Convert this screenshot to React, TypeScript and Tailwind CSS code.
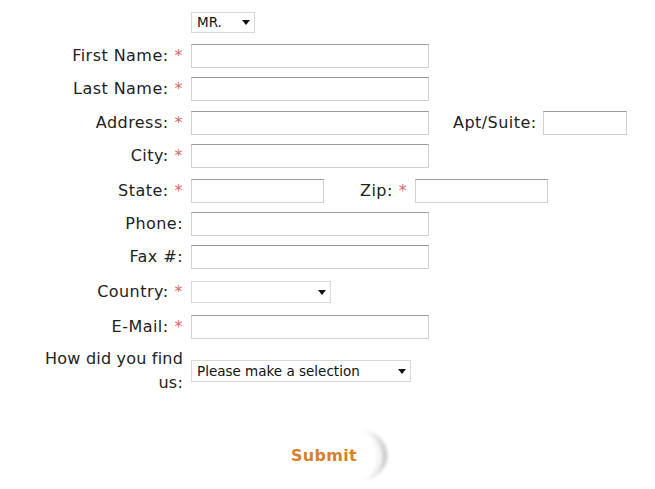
import React from 'react';

const font = { fontFamily: '"DejaVu Sans", Verdana, sans-serif' };

function Req() {
  return <span className="text-[#d96a6a] ml-[6px]">*</span>;
}

function Field({ w = 'w-[238px]' }: { w?: string }) {
  return (
    <input
      type="text"
      className={`${w} h-[24px] border border-[#d0d0d0] border-t-[#9a9a9a] bg-white outline-none`}
    />
  );
}

function Caret() {
  return (
    <svg width="8" height="5" viewBox="0 0 8 5" className="shrink-0">
      <path d="M0 0h8L4 5z" fill="#111" />
    </svg>
  );
}

function Select({ w, h = 'h-[22px]', label }: { w: string; h?: string; label?: string }) {
  return (
    <div
      className={`${w} ${h} border border-[#d8d8d8] bg-white flex items-center justify-between pl-[5px] pr-[4px] text-[13.5px] text-[#111]`}
    >
      <span>{label ?? ''}</span>
      <Caret />
    </div>
  );
}

function Row({
  label,
  req,
  children,
}: {
  label: React.ReactNode;
  req?: boolean;
  children: React.ReactNode;
}) {
  return (
    <div className="flex items-center">
      <div className="w-[183px] text-right text-[16px] text-[#222] leading-[24px] whitespace-nowrap tracking-[0.45px]">
        {label}
        {req && <Req />}
      </div>
      <div className="ml-[8px] flex items-center">{children}</div>
    </div>
  );
}

export default function App() {
  return (
    <div className="w-[655px] h-[489px] bg-white relative overflow-hidden" style={font}>
      <div className="pt-[12px] flex flex-col gap-[9px]">
        <div className="flex">
          <div className="ml-[191px]">
            <Select w="w-[64px]" h="h-[21px]" label="MR." />
          </div>
        </div>
        <div className="mt-[2px]">
          <Row label="First Name:" req>
            <Field />
          </Row>
        </div>
        <Row label="Last Name:" req>
          <Field />
        </Row>
        <div className="mt-[1px]">
          <Row label="Address:" req>
            <Field />
            <span className="ml-[24px] text-[16px] text-[#222] tracking-[0.45px]">Apt/Suite:</span>
            <div className="ml-[6px]">
              <Field w="w-[84px]" />
            </div>
          </Row>
        </div>
        <Row label="City:" req>
          <Field />
        </Row>
        <div className="mt-[2px]">
          <Row label="State:" req>
            <Field w="w-[133px]" />
            <span className="ml-[36px] text-[16px] text-[#222] tracking-[0.45px]">
              Zip:<Req />
            </span>
            <div className="ml-[8px]">
              <Field w="w-[133px]" />
            </div>
          </Row>
        </div>
        <Row label="Phone:">
          <Field />
        </Row>
        <Row label="Fax #:">
          <Field />
        </Row>
        <div className="mt-[2px]">
          <Row label="Country:" req>
            <Select w="w-[140px]" />
          </Row>
        </div>
        <div className="mt-[2px]">
          <Row label="E-Mail:" req>
            <Field />
          </Row>
        </div>
        <div className="flex items-center -mt-[1px]">
          <div className="w-[183px] flex justify-end">
            <div className="w-[142px] text-right text-[16px] text-[#222] leading-[24px] tracking-[0.2px]">
              How did you find us:
            </div>
          </div>
          <div className="ml-[8px]">
            <Select w="w-[220px]" label="Please make a selection" />
          </div>
        </div>
      </div>
      <div className="mt-[49px] pl-[291px] flex">
        <div className="relative">
          <svg
            width="56"
            height="66"
            viewBox="0 0 56 66"
            className="absolute left-[60px] -top-[22px]"
          >
            <defs>
              <filter id="soft" x="-30%" y="-30%" width="160%" height="160%">
                <feGaussianBlur stdDeviation="1.6" />
              </filter>
              <linearGradient id="cres" x1="0" y1="0" x2="1" y2="0">
                <stop offset="0" stopColor="#ffffff" />
                <stop offset="0.55" stopColor="#ececec" />
                <stop offset="1" stopColor="#c8c8c8" />
              </linearGradient>
            </defs>
            <path
              d="M8 6 C40 8 50 50 12 60 C34 46 34 18 8 6Z"
              fill="url(#cres)"
              filter="url(#soft)"
            />
            <path
              d="M20 16 C34 26 34 44 22 52 C28 42 28 26 20 16Z"
              fill="#f6f6f6"
              filter="url(#soft)"
            />
          </svg>
          <span className="relative text-[16px] font-bold text-[#d8802c] tracking-[0.3px]">Submit</span>
        </div>
      </div>
    </div>
  );
}
